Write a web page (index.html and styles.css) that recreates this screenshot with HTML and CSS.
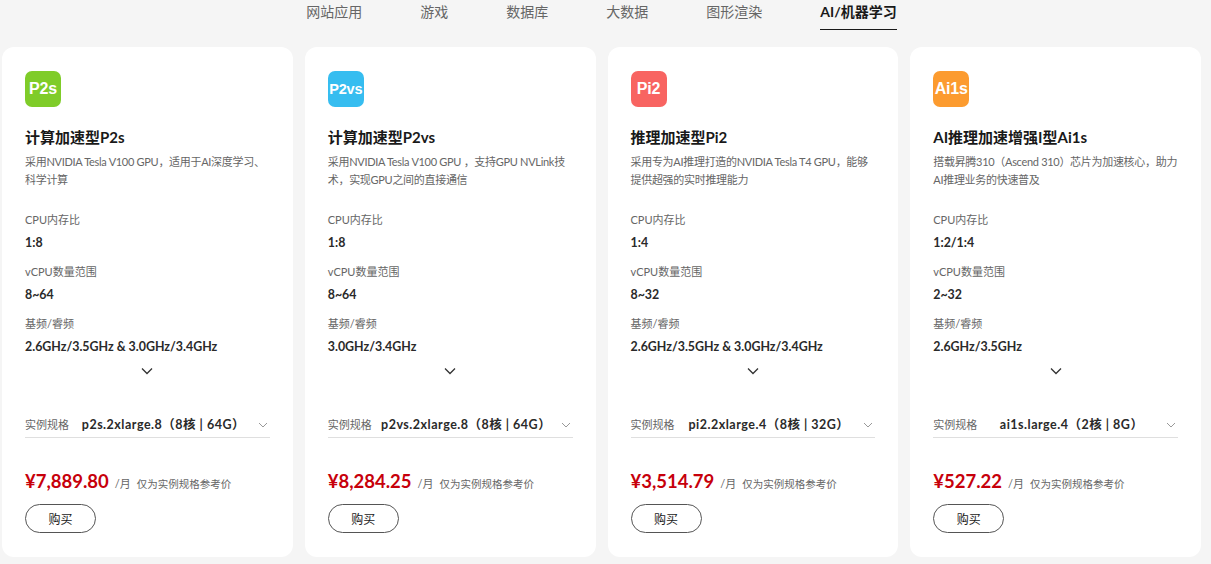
FILE: index.html
```html
<!DOCTYPE html>
<html lang="zh-CN">
<head>
<meta charset="utf-8">
<title>AI/机器学习</title>
<link rel="stylesheet" href="styles.css">
</head>
<body>
<nav class="tabs">
  <a class="tab">网站应用</a>
  <a class="tab">游戏</a>
  <a class="tab">数据库</a>
  <a class="tab">大数据</a>
  <a class="tab">图形渲染</a>
  <a class="tab active">AI/机器学习</a>
</nav>
<main class="cards">
  <section class="card">
    <div class="badge green">P2s</div>
    <h3 class="title">计算加速型P2s</h3>
    <p class="desc">采用NVIDIA Tesla V100 GPU，适用于AI深度学习、科学计算</p>
    <div class="attrs">
      <div class="attr"><div class="label">CPU内存比</div><div class="value">1:8</div></div>
      <div class="attr"><div class="label">vCPU数量范围</div><div class="value">8~64</div></div>
      <div class="attr"><div class="label">基频/睿频</div><div class="value">2.6GHz/3.5GHz &amp; 3.0GHz/3.4GHz</div></div>
    </div>
    <div class="more"><svg width="12" height="8" viewBox="0 0 12 8"><path d="M1 1.5 6 6.5 11 1.5" fill="none" stroke="#333" stroke-width="1.3"/></svg></div>
    <div class="spec"><span class="spec-label">实例规格</span><span class="spec-value">p2s.2xlarge.8（8核 | 64G）</span><svg class="caret" width="10" height="6" viewBox="0 0 10 6"><path d="M1 1 5 5 9 1" fill="none" stroke="#999" stroke-width="1"/></svg></div>
    <div class="price"><span class="amount">¥7,889.80</span><span class="unit">/月</span><span class="note">仅为实例规格参考价</span></div>
    <button class="buy">购买</button>
  </section>
  <section class="card">
    <div class="badge blue">P2vs</div>
    <h3 class="title">计算加速型P2vs</h3>
    <p class="desc">采用NVIDIA Tesla V100 GPU ，支持GPU NVLink技术，实现GPU之间的直接通信</p>
    <div class="attrs">
      <div class="attr"><div class="label">CPU内存比</div><div class="value">1:8</div></div>
      <div class="attr"><div class="label">vCPU数量范围</div><div class="value">8~64</div></div>
      <div class="attr"><div class="label">基频/睿频</div><div class="value">3.0GHz/3.4GHz</div></div>
    </div>
    <div class="more"><svg width="12" height="8" viewBox="0 0 12 8"><path d="M1 1.5 6 6.5 11 1.5" fill="none" stroke="#333" stroke-width="1.3"/></svg></div>
    <div class="spec"><span class="spec-label">实例规格</span><span class="spec-value">p2vs.2xlarge.8（8核 | 64G）</span><svg class="caret" width="10" height="6" viewBox="0 0 10 6"><path d="M1 1 5 5 9 1" fill="none" stroke="#999" stroke-width="1"/></svg></div>
    <div class="price"><span class="amount">¥8,284.25</span><span class="unit">/月</span><span class="note">仅为实例规格参考价</span></div>
    <button class="buy">购买</button>
  </section>
  <section class="card">
    <div class="badge red">Pi2</div>
    <h3 class="title">推理加速型Pi2</h3>
    <p class="desc">采用专为AI推理打造的NVIDIA Tesla T4 GPU，能够提供超强的实时推理能力</p>
    <div class="attrs">
      <div class="attr"><div class="label">CPU内存比</div><div class="value">1:4</div></div>
      <div class="attr"><div class="label">vCPU数量范围</div><div class="value">8~32</div></div>
      <div class="attr"><div class="label">基频/睿频</div><div class="value">2.6GHz/3.5GHz &amp; 3.0GHz/3.4GHz</div></div>
    </div>
    <div class="more"><svg width="12" height="8" viewBox="0 0 12 8"><path d="M1 1.5 6 6.5 11 1.5" fill="none" stroke="#333" stroke-width="1.3"/></svg></div>
    <div class="spec"><span class="spec-label">实例规格</span><span class="spec-value">pi2.2xlarge.4（8核 | 32G）</span><svg class="caret" width="10" height="6" viewBox="0 0 10 6"><path d="M1 1 5 5 9 1" fill="none" stroke="#999" stroke-width="1"/></svg></div>
    <div class="price"><span class="amount">¥3,514.79</span><span class="unit">/月</span><span class="note">仅为实例规格参考价</span></div>
    <button class="buy">购买</button>
  </section>
  <section class="card">
    <div class="badge orange">Ai1s</div>
    <h3 class="title">AI推理加速增强I型Ai1s</h3>
    <p class="desc">搭载昇腾310（Ascend 310）芯片为加速核心，助力AI推理业务的快速普及</p>
    <div class="attrs">
      <div class="attr"><div class="label">CPU内存比</div><div class="value">1:2/1:4</div></div>
      <div class="attr"><div class="label">vCPU数量范围</div><div class="value">2~32</div></div>
      <div class="attr"><div class="label">基频/睿频</div><div class="value">2.6GHz/3.5GHz</div></div>
    </div>
    <div class="more"><svg width="12" height="8" viewBox="0 0 12 8"><path d="M1 1.5 6 6.5 11 1.5" fill="none" stroke="#333" stroke-width="1.3"/></svg></div>
    <div class="spec"><span class="spec-label">实例规格</span><span class="spec-value">ai1s.large.4（2核 | 8G）</span><svg class="caret" width="10" height="6" viewBox="0 0 10 6"><path d="M1 1 5 5 9 1" fill="none" stroke="#999" stroke-width="1"/></svg></div>
    <div class="price"><span class="amount">¥527.22</span><span class="unit">/月</span><span class="note">仅为实例规格参考价</span></div>
    <button class="buy">购买</button>
  </section>
</main>
</body>
</html>
```

FILE: styles.css
```css
* { box-sizing: border-box; }
html, body { margin: 0; padding: 0; }
body {
  background: #f5f5f5;
  font-family: Lato, "Noto Sans CJK SC", sans-serif;
  color: #191919;
  width: 1211px;
  height: 564px;
  overflow: hidden;
}
.tabs {
  display: flex;
  justify-content: center;
  gap: 58px;
  height: 47px;
  padding-right: 8px;
}
.tab {
  font-size: 14px;
  line-height: 24px;
  height: 30px;
  color: #666;
  cursor: pointer;
}
.tab.active {
  color: #191919;
  font-weight: 700;
  border-bottom: 1.5px solid #191919;
}
.cards {
  display: grid;
  grid-template-columns: repeat(4, 1fr);
  gap: 12px;
  margin: 0 10px 0 2px;
}
.card {
  background: #fff;
  border-radius: 12px;
  padding: 24px 23px 23px 23px;
  display: flex;
  flex-direction: column;
  height: 510px;
}
.card > * { flex-shrink: 0; }
.badge {
  width: 36px;
  height: 36px;
  border-radius: 7px;
  color: #fff;
  font-family: "Liberation Sans", Arial, sans-serif;
  font-weight: 700;
  font-size: 16px;
  display: flex;
  align-items: center;
  justify-content: center;
  letter-spacing: -0.2px;
}
.badge.green { background: #7fcc29; }
.badge.blue { background: #36bdf0; font-size: 14.5px; }
.badge.red { background: #f86461; }
.badge.orange { background: #fc9b2f; }
.title {
  margin: 18px 0 0;
  font-size: 15px;
  line-height: 24px;
  font-weight: 700;
  color: #191919;
}
.desc {
  margin: 4px 0 0;
  font-size: 11px;
  line-height: 18px;
  letter-spacing: -0.3px;
  color: #666;
  height: 36px;
}
.attrs {
  margin-top: 22px;
  display: flex;
  flex-direction: column;
  gap: 10px;
}
.label {
  font-size: 11px;
  line-height: 18px;
  color: #666;
}
.value {
  margin-top: 4px;
  font-size: 12.4px;
  line-height: 20px;
  font-weight: 700;
  color: #2a2a2a;
}
.more {
  height: 24px;
  display: flex;
  align-items: center;
  justify-content: center;
  margin-top: 2px;
}
.spec {
  margin-top: 30px;
  height: 25px;
  display: flex;
  align-items: center;
  border-bottom: 1px solid #dfdfdf;
  padding-bottom: 1px;
}
.spec-label {
  font-size: 11px;
  color: #666;
  line-height: 24px;
}
.spec-value {
  flex: 1;
  text-align: center;
  font-size: 12.5px;
  letter-spacing: 0.5px;
  font-weight: 700;
  color: #2a2a2a;
  line-height: 24px;
}
.caret { margin-right: 2px; }
.price {
  margin-top: 29px;
  display: flex;
  align-items: baseline;
  line-height: 28px;
}
.amount {
  color: #c7000b;
  font-size: 18.5px;
  font-weight: 700;
}
.unit {
  margin-left: 6px;
  font-size: 11px;
  color: #666;
}
.note {
  margin-left: 6px;
  font-size: 10.5px;
  color: #666;
}
.buy {
  margin-top: 6px;
  width: 71px;
  height: 29px;
  border: 1px solid #555;
  border-radius: 15px;
  background: #fff;
  font-family: inherit;
  font-size: 12px;
  color: #191919;
  padding: 0;
  cursor: pointer;
}
```
